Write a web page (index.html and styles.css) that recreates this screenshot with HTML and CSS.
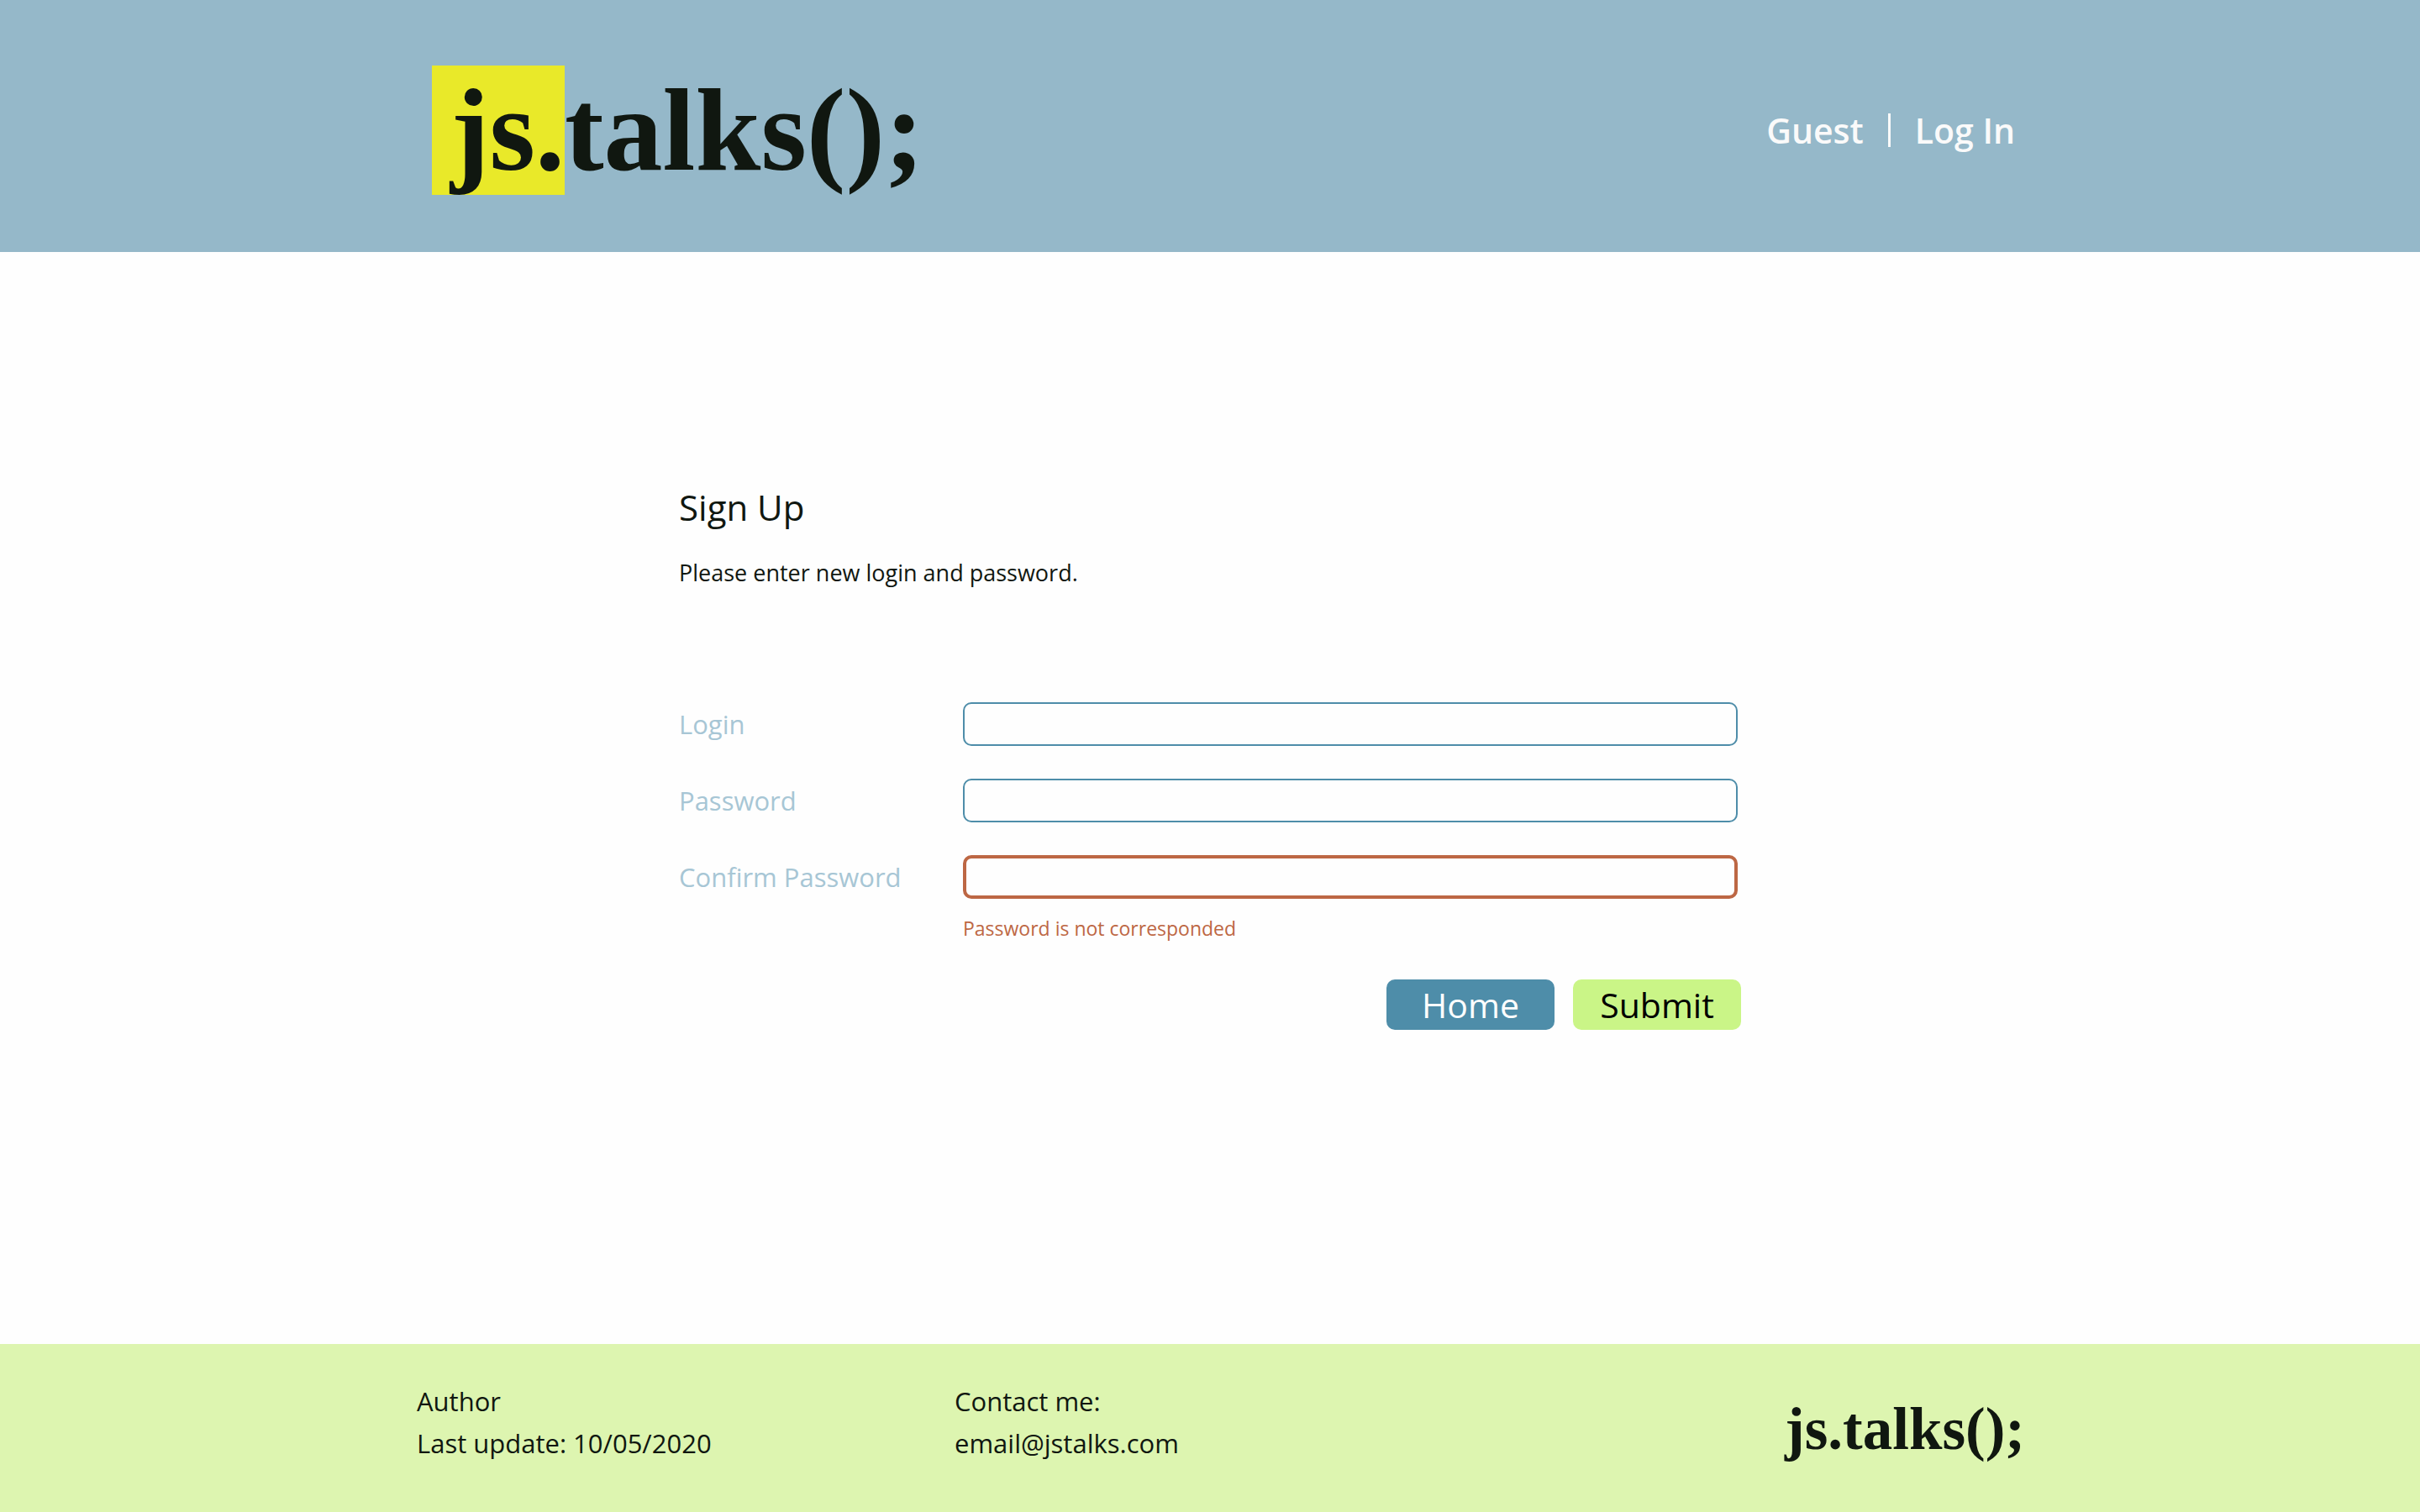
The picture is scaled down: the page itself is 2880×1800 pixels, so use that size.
FILE: index.html
```html
<!DOCTYPE html>
<html lang="en">
<head>
  <meta charset="utf-8">
  <meta name="viewport" content="width=device-width, initial-scale=1">
  <title>js.talks(); Sign Up</title>
  <link rel="stylesheet" href="styles.css">
</head>
<body>
  <header class="header">
    <div class="header-inner">
      <a class="logo" href="/"><span class="logo-mark">js.</span><span class="logo-rest">talks();</span></a>
      <nav class="nav">
        <span class="nav-item">Guest</span>
        <span class="nav-divider"></span>
        <a class="nav-item" href="/login">Log In</a>
      </nav>
    </div>
  </header>

  <main class="main">
    <h1 class="title">Sign Up</h1>
    <p class="intro">Please enter new login and password.</p>
    <form class="form">
      <div class="fields">
        <label class="label" for="login">Login</label>
        <input class="input" id="login" type="text">
        <label class="label" for="password">Password</label>
        <input class="input" id="password" type="password">
        <label class="label" for="confirm">Confirm Password</label>
        <input class="input input-invalid" id="confirm" type="password" aria-invalid="true" aria-describedby="confirm-error">
        <p class="error" id="confirm-error">Password is not corresponded</p>
      </div>
      <div class="actions">
        <button class="button button-home" type="button">Home</button>
        <button class="button button-submit" type="submit">Submit</button>
      </div>
    </form>
  </main>

  <footer class="footer">
    <div class="footer-inner">
      <div class="footer-column">
        <p>Author</p>
        <p>Last update: 10/05/2020</p>
      </div>
      <div class="footer-column">
        <p>Contact me:</p>
        <p><a class="footer-link" href="mailto:email@jstalks.com">email@jstalks.com</a></p>
      </div>
      <a class="footer-logo" href="/">js.talks();</a>
    </div>
  </footer>
</body>
</html>
```
FILE: styles.css
```css
:root {
  --ink: #101710;
  --blue: #4e8da9;
  --blue-soft: #95b8c9;
  --blue-pale: #a7c6d5;
  --green: #caf587;
  --green-pale: #ddf5b0;
  --yellow: #e9e929;
  --red: #bd6744;
}

* {
  box-sizing: border-box;
}

body {
  display: flex;
  flex-direction: column;
  min-height: 100vh;
  margin: 0;
  background: #fefefe;
  color: var(--ink);
  font-family: "Open Sans", "Noto Sans", sans-serif;
}

h1,
p {
  margin: 0;
  font-weight: 400;
}

a {
  color: inherit;
  text-decoration: none;
}

.header {
  padding: 78px 0 68px;
  background: var(--blue-soft);
}

.header-inner {
  display: flex;
  align-items: center;
  justify-content: space-between;
  max-width: 1920px;
  margin: 0 auto;
  padding: 0 2px 0 34px;
}

.logo {
  display: flex;
  font-family: "Liberation Serif", serif;
  font-size: 140px;
  font-weight: 700;
  line-height: 154px;
}

.logo-mark {
  min-width: 158px;
  background: var(--yellow);
  text-align: right;
}

.nav {
  display: flex;
  align-items: center;
  gap: 29px;
  color: #fafafa;
  font-size: 41px;
  font-weight: 600;
  line-height: 56px;
}

.nav-divider {
  width: 3px;
  height: 40px;
  background: currentColor;
}

.main {
  flex: 1;
  width: 100%;
  max-width: 1264px;
  margin: 0 auto;
  padding: 276px 0 60px;
}

.title {
  font-size: 42px;
  line-height: 56px;
}

.intro {
  margin-top: 32px;
  font-size: 27px;
  line-height: 36px;
}

.form {
  margin-top: 136px;
}

.fields {
  display: grid;
  grid-template-columns: 338px 1fr;
  row-gap: 39px;
  padding-right: 4px;
}

.label {
  color: var(--blue-pale);
  font-size: 31px;
  line-height: 52px;
}

.input {
  width: 100%;
  height: 52px;
  padding: 0 16px;
  border: 2px solid var(--blue);
  border-radius: 10px;
  background: transparent;
  color: var(--ink);
  font: inherit;
  font-size: 27px;
}

.input-invalid {
  border: 4px solid var(--red);
}

.error {
  grid-column: 2;
  margin-top: -20px;
  color: var(--red);
  font-size: 23px;
  line-height: 32px;
}

.actions {
  display: flex;
  justify-content: flex-end;
  gap: 22px;
  margin-top: 45px;
}

.button {
  width: 200px;
  height: 60px;
  padding: 0;
  border: 0;
  border-radius: 10px;
  font: inherit;
  font-size: 41px;
  line-height: 60px;
}

.button-home {
  background: var(--blue);
  color: #fefefe;
}

.button-submit {
  background: var(--green);
  color: #000;
}

.footer {
  padding: 43px 0 57px;
  background: var(--green-pale);
}

.footer-inner {
  display: grid;
  grid-template-columns: 640px 1fr auto;
  max-width: 1940px;
  margin: 0 auto;
  padding-left: 26px;
  font-size: 31px;
  line-height: 50px;
}

.footer-logo {
  align-self: end;
  font-family: "Liberation Serif", serif;
  font-size: 71px;
  font-weight: 700;
  line-height: 84px;
}
```
